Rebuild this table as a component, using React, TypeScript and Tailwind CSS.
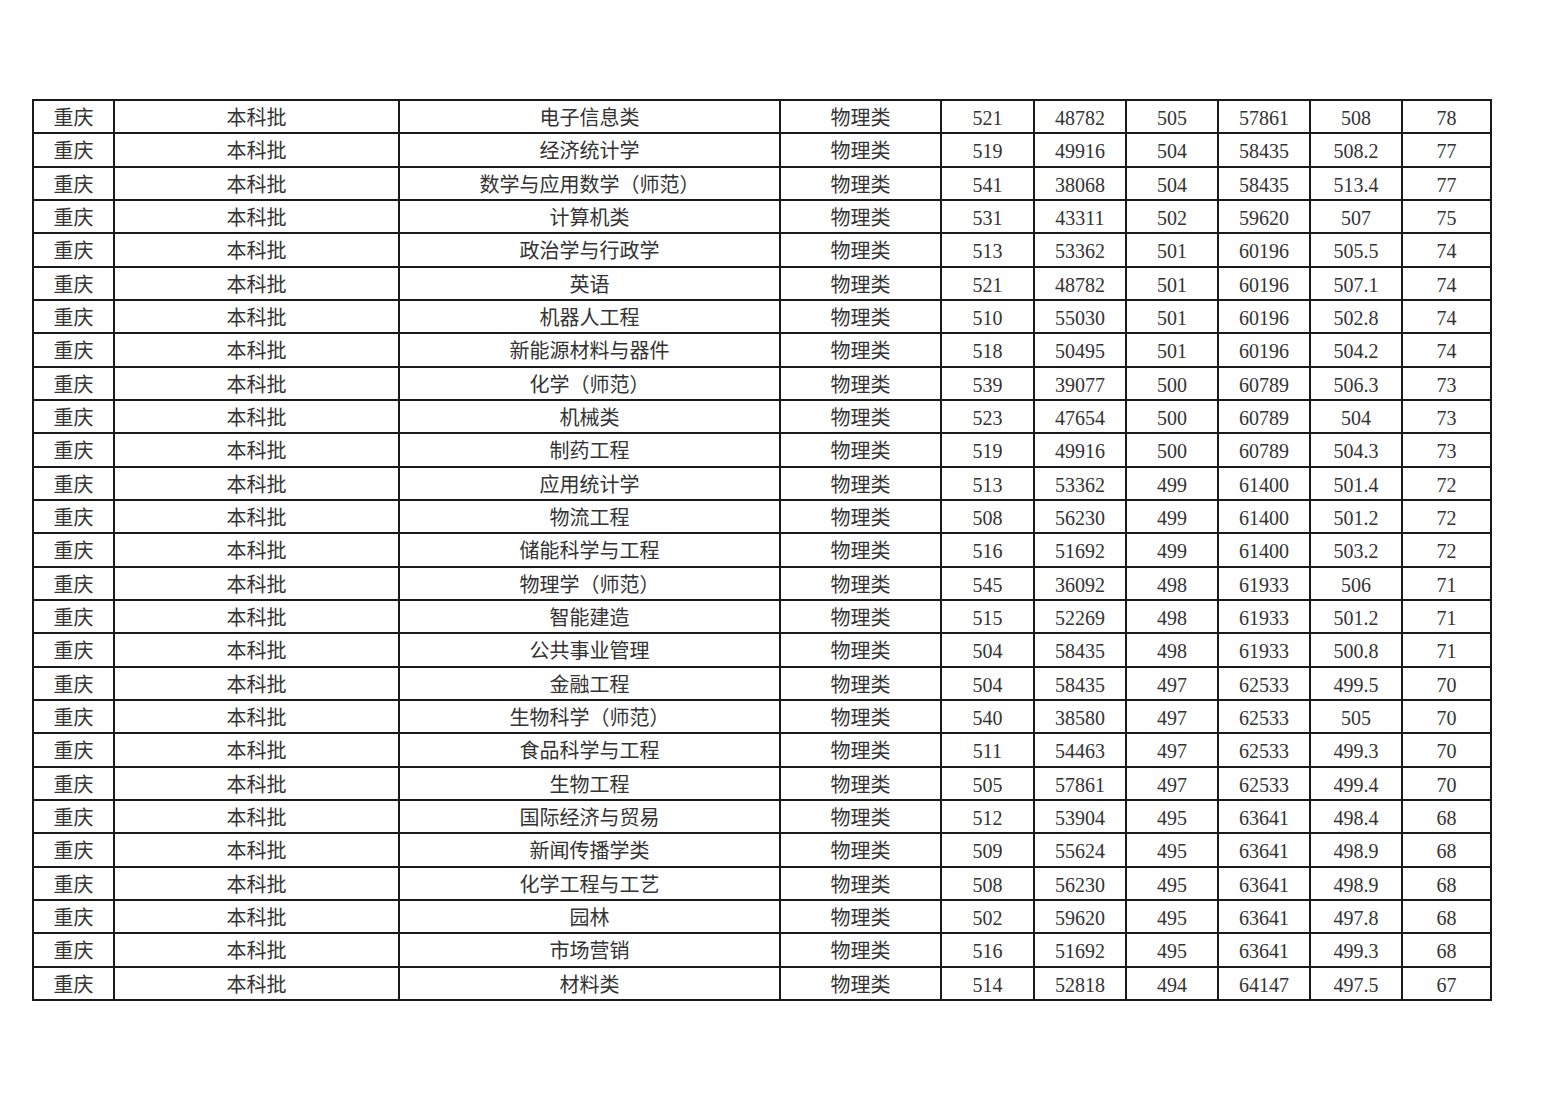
const rows: [string, string, string, string, string, string, string][] = [
  ["电子信息类", "521", "48782", "505", "57861", "508", "78"],
  ["经济统计学", "519", "49916", "504", "58435", "508.2", "77"],
  ["数学与应用数学（师范）", "541", "38068", "504", "58435", "513.4", "77"],
  ["计算机类", "531", "43311", "502", "59620", "507", "75"],
  ["政治学与行政学", "513", "53362", "501", "60196", "505.5", "74"],
  ["英语", "521", "48782", "501", "60196", "507.1", "74"],
  ["机器人工程", "510", "55030", "501", "60196", "502.8", "74"],
  ["新能源材料与器件", "518", "50495", "501", "60196", "504.2", "74"],
  ["化学（师范）", "539", "39077", "500", "60789", "506.3", "73"],
  ["机械类", "523", "47654", "500", "60789", "504", "73"],
  ["制药工程", "519", "49916", "500", "60789", "504.3", "73"],
  ["应用统计学", "513", "53362", "499", "61400", "501.4", "72"],
  ["物流工程", "508", "56230", "499", "61400", "501.2", "72"],
  ["储能科学与工程", "516", "51692", "499", "61400", "503.2", "72"],
  ["物理学（师范）", "545", "36092", "498", "61933", "506", "71"],
  ["智能建造", "515", "52269", "498", "61933", "501.2", "71"],
  ["公共事业管理", "504", "58435", "498", "61933", "500.8", "71"],
  ["金融工程", "504", "58435", "497", "62533", "499.5", "70"],
  ["生物科学（师范）", "540", "38580", "497", "62533", "505", "70"],
  ["食品科学与工程", "511", "54463", "497", "62533", "499.3", "70"],
  ["生物工程", "505", "57861", "497", "62533", "499.4", "70"],
  ["国际经济与贸易", "512", "53904", "495", "63641", "498.4", "68"],
  ["新闻传播学类", "509", "55624", "495", "63641", "498.9", "68"],
  ["化学工程与工艺", "508", "56230", "495", "63641", "498.9", "68"],
  ["园林", "502", "59620", "495", "63641", "497.8", "68"],
  ["市场营销", "516", "51692", "495", "63641", "499.3", "68"],
  ["材料类", "514", "52818", "494", "64147", "497.5", "67"],
];

const widths = [81, 285, 381, 161, 93, 92, 92, 92, 92, 89];

// each cell: centred text, nudged down a little to sit like the scanned sheet
const cell = "border-2 border-[#1a1a1a] p-0 pt-[3px] text-center leading-none";

export default function App() {
  return (
    <div className="min-h-[1102px] w-[1559px] bg-white pl-[32px] pt-[99px] font-['Liberation_Serif','Noto_Sans_CJK_SC',serif] text-[20px] text-[#333]">
      <table className="table-fixed border-collapse border-2 border-[#1a1a1a]" style={{ width: 1460 }}>
        <colgroup>
          {widths.map((w, i) => (
            <col key={i} style={{ width: w }} />
          ))}
        </colgroup>
        <tbody>
          {rows.map((r, i) => (
            <tr key={i} className="h-[33.33px]">
              <td className={cell}>重庆</td>
              <td className={cell}>本科批</td>
              <td className={cell}>{r[0]}</td>
              <td className={cell}>物理类</td>
              {r.slice(1).map((v, j) => (
                <td key={j} className={cell}>
                  {v}
                </td>
              ))}
            </tr>
          ))}
        </tbody>
      </table>
    </div>
  );
}
